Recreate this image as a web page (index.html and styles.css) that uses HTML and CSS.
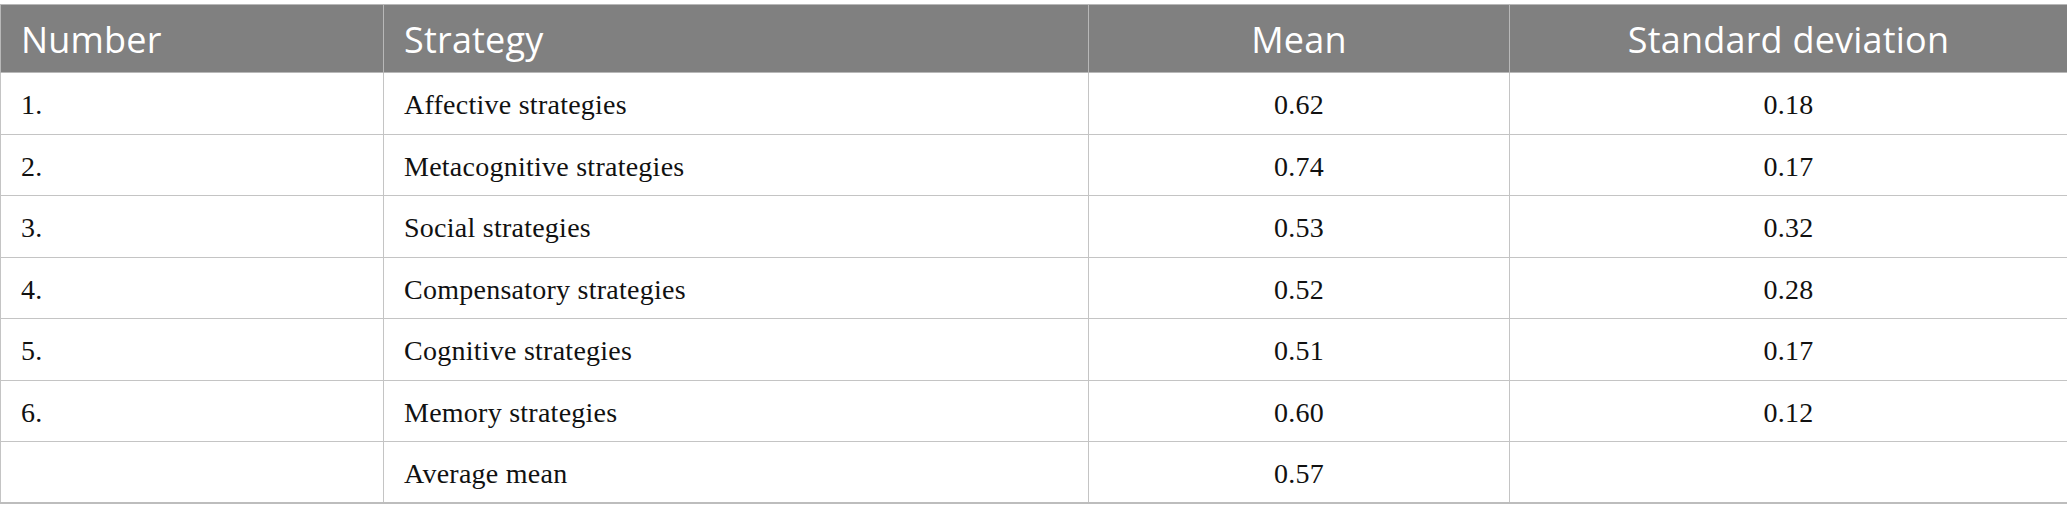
FILE: index.html
```html
<!DOCTYPE html>
<html>
<head>
<meta charset="utf-8">
<link rel="stylesheet" href="styles.css">
</head>
<body>
<table class="data-table">
  <colgroup>
    <col class="c-num">
    <col class="c-strat">
    <col class="c-mean">
    <col class="c-sd">
  </colgroup>
  <thead>
    <tr>
      <th class="left">Number</th>
      <th class="left">Strategy</th>
      <th class="center">Mean</th>
      <th class="center">Standard deviation</th>
    </tr>
  </thead>
  <tbody>
    <tr><td>1.</td><td>Affective strategies</td><td class="center">0.62</td><td class="center">0.18</td></tr>
    <tr><td>2.</td><td>Metacognitive strategies</td><td class="center">0.74</td><td class="center">0.17</td></tr>
    <tr><td>3.</td><td>Social strategies</td><td class="center">0.53</td><td class="center">0.32</td></tr>
    <tr><td>4.</td><td>Compensatory strategies</td><td class="center">0.52</td><td class="center">0.28</td></tr>
    <tr><td>5.</td><td>Cognitive strategies</td><td class="center">0.51</td><td class="center">0.17</td></tr>
    <tr><td>6.</td><td>Memory strategies</td><td class="center">0.60</td><td class="center">0.12</td></tr>
    <tr class="last"><td></td><td>Average mean</td><td class="center">0.57</td><td class="center"></td></tr>
  </tbody>
</table>
</body>
</html>
```
FILE: styles.css
```css
html, body {
  margin: 0;
  padding: 0;
  background: #ffffff;
}
body {
  padding-top: 4px;
}
.data-table {
  width: 2067px;
  border-collapse: collapse;
  table-layout: fixed;
}
.c-num { width: 383px; }
.c-strat { width: 705px; }
.c-mean { width: 421px; }
.c-sd { width: 558px; }

.data-table th {
  background: #808080;
  color: #ffffff;
  font-family: "Open Sans", "Noto Sans", sans-serif;
  font-weight: 400;
  font-size: 36px;
  letter-spacing: 0.2px;
  height: 68px;
  padding: 2px 20px 0 20px;
  box-sizing: border-box;
  border: 1px solid #b8b8b8;
  vertical-align: middle;
  line-height: 1;
}
.data-table td {
  font-family: "Liberation Serif", "Times New Roman", serif;
  font-size: 28px;
  letter-spacing: 0.25px;
  color: #111111;
  height: 61.5px;
  padding: 4px 20px 0 20px;
  box-sizing: border-box;
  border: 1px solid #c4c4c4;
  vertical-align: middle;
}
.data-table tr.last td {
  border-bottom: 2px solid #bdbdbd;
}
.left { text-align: left; }
.center { text-align: center; }
```
